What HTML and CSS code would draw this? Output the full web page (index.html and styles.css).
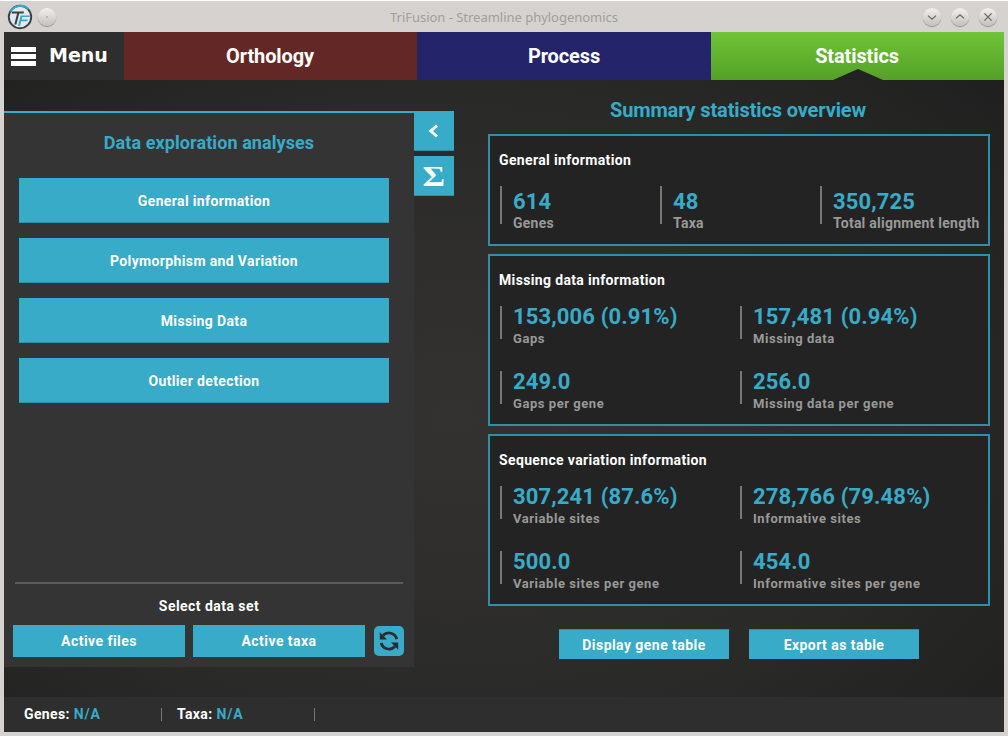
FILE: index.html
```html
<!DOCTYPE html>
<html lang="en">
<head>
<meta charset="utf-8">
<title>TriFusion - Streamline phylogenomics</title>
<link rel="stylesheet" href="styles.css">
</head>
<body>
<div class="window">
  <header class="titlebar">
    <svg class="logo" width="26" height="26" viewBox="0 0 26 26">
      <circle cx="13" cy="13" r="11.2" fill="#e4e8ea" stroke="#3a4144" stroke-width="1.9"/>
      <path d="M3.6 7.5A11.6 11.6 0 0 1 21.5 5" fill="none" stroke="#37abc8" stroke-width="2"/>
      <path d="M5 7.6H17L16.5 9.4H12.2L9.4 20.6H7.3L10.1 9.4H4.6Z" fill="#3a4144"/>
      <path d="M13.6 11.4H23L22.4 13.1H15.4L14.7 15.6H20.8L20.3 17.2H14.3L13 22H11Z" fill="#37abc8"/>
    </svg>
    <span class="wbtn"><svg width="20" height="20" viewBox="0 0 20 20"><circle cx="10" cy="10" r="1" fill="#aaa"/></svg></span>
    <div class="wtitle">TriFusion - Streamline phylogenomics</div>
    <span class="wbtn"><svg width="20" height="20" viewBox="0 0 20 20"><path d="M5.5 8.5L10 12.5L14.5 8.5" fill="none" stroke="#666" stroke-width="1.4"/></svg></span>
    <span class="wbtn"><svg width="20" height="20" viewBox="0 0 20 20"><path d="M5.5 11.5L10 7.5L14.5 11.5" fill="none" stroke="#666" stroke-width="1.4"/></svg></span>
    <span class="wbtn"><svg width="20" height="20" viewBox="0 0 20 20"><path d="M6 6L14 14M14 6L6 14" fill="none" stroke="#666" stroke-width="1.4"/></svg></span>
  </header>
  <div class="app">
    <nav class="nav">
      <div class="menu">
        <span class="burger"><i></i><i></i><i></i></span>
        <span class="menu-label">Menu</span>
      </div>
      <div class="tab tab-orth">Orthology</div>
      <div class="tab tab-proc">Process</div>
      <div class="tab tab-stat">Statistics<span class="notch"></span></div>
    </nav>
    <main class="main">
      <aside class="panel">
        <h2 class="panel-title">Data exploration analyses</h2>
        <div class="analysis-list">
          <div class="btn analysis">General information</div>
          <div class="btn analysis">Polymorphism and Variation</div>
          <div class="btn analysis">Missing Data</div>
          <div class="btn analysis">Outlier detection</div>
        </div>
        <div class="panel-foot">
          <div class="select-label">Select data set</div>
          <div class="select-row">
            <div class="btn select">Active files</div>
            <div class="btn select">Active taxa</div>
            <div class="refresh">
              <svg width="24" height="24" viewBox="0 0 24 24"><path d="M19.8 10.2A8.2 8.2 0 0 0 6 6.4" fill="none" stroke="#2b2b2b" stroke-width="2.8"/><path d="M2.8 3.2V10.4H10Z" fill="#2b2b2b"/><path d="M4.2 13.8A8.2 8.2 0 0 0 18 17.6" fill="none" stroke="#2b2b2b" stroke-width="2.8"/><path d="M21.2 20.8V13.6H14Z" fill="#2b2b2b"/></svg>
            </div>
          </div>
        </div>
      </aside>
      <div class="side-tabs">
        <div class="side-tab">
          <svg width="14" height="14" viewBox="0 0 14 14"><path d="M10 1.5L3.8 7L10 12.5" fill="none" stroke="#fff" stroke-width="3"/></svg>
        </div>
        <div class="side-tab"><span class="sigma">Σ</span></div>
      </div>
      <section class="content">
        <h1 class="content-title">Summary statistics overview</h1>
        <div class="card card-general">
          <h3 class="card-title">General information</h3>
          <div class="stats stats-general">
            <div class="stat"><div class="num">614</div><div class="lab">Genes</div></div>
            <div class="stat"><div class="num">48</div><div class="lab">Taxa</div></div>
            <div class="stat"><div class="num">350,725</div><div class="lab">Total alignment length</div></div>
          </div>
        </div>
        <div class="card">
          <h3 class="card-title">Missing data information</h3>
          <div class="stats stats-grid">
            <div class="stat"><div class="num">153,006 (0.91%)</div><div class="lab">Gaps</div></div>
            <div class="stat"><div class="num">157,481 (0.94%)</div><div class="lab">Missing data</div></div>
            <div class="stat"><div class="num">249.0</div><div class="lab">Gaps per gene</div></div>
            <div class="stat"><div class="num">256.0</div><div class="lab">Missing data per gene</div></div>
          </div>
        </div>
        <div class="card">
          <h3 class="card-title">Sequence variation information</h3>
          <div class="stats stats-grid">
            <div class="stat"><div class="num">307,241 (87.6%)</div><div class="lab">Variable sites</div></div>
            <div class="stat"><div class="num">278,766 (79.48%)</div><div class="lab">Informative sites</div></div>
            <div class="stat"><div class="num">500.0</div><div class="lab">Variable sites per gene</div></div>
            <div class="stat"><div class="num">454.0</div><div class="lab">Informative sites per gene</div></div>
          </div>
        </div>
        <div class="actions">
          <div class="btn action">Display gene table</div>
          <div class="btn action">Export as table</div>
        </div>
      </section>
    </main>
    <footer class="status">
      <div class="status-item status-genes">Genes: <b>N/A</b></div>
      <div class="status-item status-taxa">Taxa: <b>N/A</b></div>
    </footer>
  </div>
</div>
</body>
</html>
```
FILE: styles.css
```css
* { box-sizing: border-box; }
html, body { margin: 0; height: 100%; }
body { font-family: Roboto, "Liberation Sans", sans-serif; background: #d6d2cf; overflow: hidden; }
.window { width: 1008px; height: 736px; padding: 0 4px 4px; display: flex; flex-direction: column; background: #d6d2cf; border-top: 1px solid #fff; }
.titlebar { height: 31px; flex: none; display: flex; align-items: center; gap: 10px; padding: 0 7px 0 3px; }
.logo { flex: none; margin-right: -5px; margin-top: 0; }
.wbtn { width: 18px; height: 18px; border-radius: 50%; background: linear-gradient(#f3f1ef, #c2bfbc); box-shadow: 0 1px 1px #8f8c8a; display: flex; align-items: center; justify-content: center; flex: none; margin-top: 1px; }
.wbtn svg { width: 18px; height: 18px; }
.wtitle { flex: 1; text-align: center; font: 13px "Noto Sans", sans-serif; color: #a19e9b; padding-left: 29px; letter-spacing: -0.02px; }
.app { flex: 1; min-height: 0; display: flex; flex-direction: column; background: radial-gradient(ellipse at 45% 55%, #333231 0%, #2a2a29 55%, #1e1e1e 100%); color: #fff; }
.nav { height: 48px; flex: none; display: flex; }
.menu { width: 120px; background: #2e2e2e; display: flex; align-items: center; padding-left: 7px; gap: 13px; }
.burger { display: flex; flex-direction: column; gap: 2px; width: 25px; }
.burger i { display: block; height: 5px; background: #fff; }
.menu-label { font: bold 19px "DejaVu Sans", sans-serif; margin-top: -3px; }
.tab { flex: 1; display: flex; align-items: center; justify-content: center; font-size: 20px; font-weight: 700; letter-spacing: -0.12px; position: relative; }
.tab-orth { background: #632826; width: 293px; flex: none; padding-right: 1px; }
.tab-proc { background: #24246a; width: 294px; flex: none; }
.tab-stat { background: linear-gradient(#6fc536, #55a028); padding-right: 1px; }
.notch { position: absolute; left: 50%; bottom: 0; margin-left: -25px; width: 0; height: 0; border-left: 25px solid transparent; border-right: 25px solid transparent; border-bottom: 11px solid #222; }
.main { flex: 1; min-height: 0; display: flex; align-items: flex-start; }
.panel { width: 410px; height: 556px; margin-top: 31px; border-top: 2px solid #37abc8; background: #343434; display: flex; flex-direction: column; padding: 0 10px 10px 9px; }
.panel-title { margin: 19px 0 0; height: 22px; text-align: center; font-size: 18px; line-height: 22px; font-weight: 700; letter-spacing: 0.08px; color: #37abc8; width: 392px; }
.btn { background: #37abc8; color: #fff; display: flex; align-items: center; justify-content: center; font-weight: 700; font-size: 14px; letter-spacing: 0.45px; flex: none; }
.analysis-list { margin: 24px 0 0 6px; display: flex; flex-direction: column; gap: 15px; flex: 1; }
.analysis { width: 370px; height: 45px; border-bottom: 1px solid #2f8ea8; padding-top: 2px; letter-spacing: 0.36px; }
.panel-foot { border-top: 2px solid #5c5c5c; margin: 0 1px 0 2px; padding-top: 14px; }
.select-label { text-align: center; font-size: 14px; line-height: 16px; font-weight: 700; letter-spacing: 0.45px; }
.select-row { display: flex; align-items: center; margin: 11px -4px 0 -2px; gap: 8px; }
.select { width: 172px; height: 32px; }
.refresh { width: 30px; height: 30px; border-radius: 5px; background: #37abc8; display: flex; align-items: center; justify-content: center; margin-left: 1px; flex: none; }
.side-tabs { display: flex; flex-direction: column; gap: 5px; margin-top: 31px; width: 40px; flex: none; }
.side-tab { height: 40px; background: #37abc8; display: flex; align-items: center; justify-content: center; border-bottom: 1px solid #2f8ea8; }
.sigma { display: inline-block; font: bold 30px/1 "Liberation Serif", serif; color: #fff; transform: scaleX(1.15); }
.content { margin-left: 34px; width: 502px; display: flex; flex-direction: column; }
.content-title { margin: 18px 0 12px; height: 24px; line-height: 24px; text-align: center; font-size: 20px; font-weight: 700; letter-spacing: -0.13px; color: #37abc8; padding-right: 2px; }
.card { border: 2px solid #2f8ea8; background: #242323; height: 172px; margin-bottom: 8px; padding: 15px 9px 0; }
.card-general { height: 112px; }
.card-title { margin: 0; font-size: 14px; line-height: 18px; font-weight: 700; letter-spacing: 0.35px; }
.stats { margin-top: 17px; margin-left: 1px; }
.stats-general { display: grid; grid-template-columns: 160px 160px 1fr; }
.stats-grid { display: grid; grid-template-columns: 240px 1fr; row-gap: 32px; }
.stat { border-left: 2px solid #777; padding-left: 11px; height: 33px; }
.stats-general .stat { height: 38px; padding-top: 5px; }
.num { font-size: 22px; line-height: 26px; font-weight: 700; color: #37abc8; letter-spacing: 0.14px; white-space: nowrap; margin-top: -2px; }
.lab { font-size: 13px; line-height: 15px; font-weight: 700; color: #999; letter-spacing: 0.55px; white-space: nowrap; margin-top: 1px; }
.stats-general .lab { font-size: 14px; letter-spacing: 0.25px; }
.actions { display: flex; justify-content: center; gap: 20px; margin-top: 15px; }
.action { width: 170px; height: 30px; border-top: 1px solid #2f8ea8; }
.status { height: 35px; flex: none; background: #2e2e2e; display: flex; align-items: center; padding-left: 20px; font-size: 14px; font-weight: 700; letter-spacing: 0.35px; }
.status-item { height: 13px; line-height: 13px; border-right: 1px solid #777; display: flex; gap: 4px; }
.status-genes { width: 138px; }
.status-taxa { width: 153px; padding-left: 15px; }
.status b { color: #37abc8; font-weight: 700; letter-spacing: 0.8px; }
```
